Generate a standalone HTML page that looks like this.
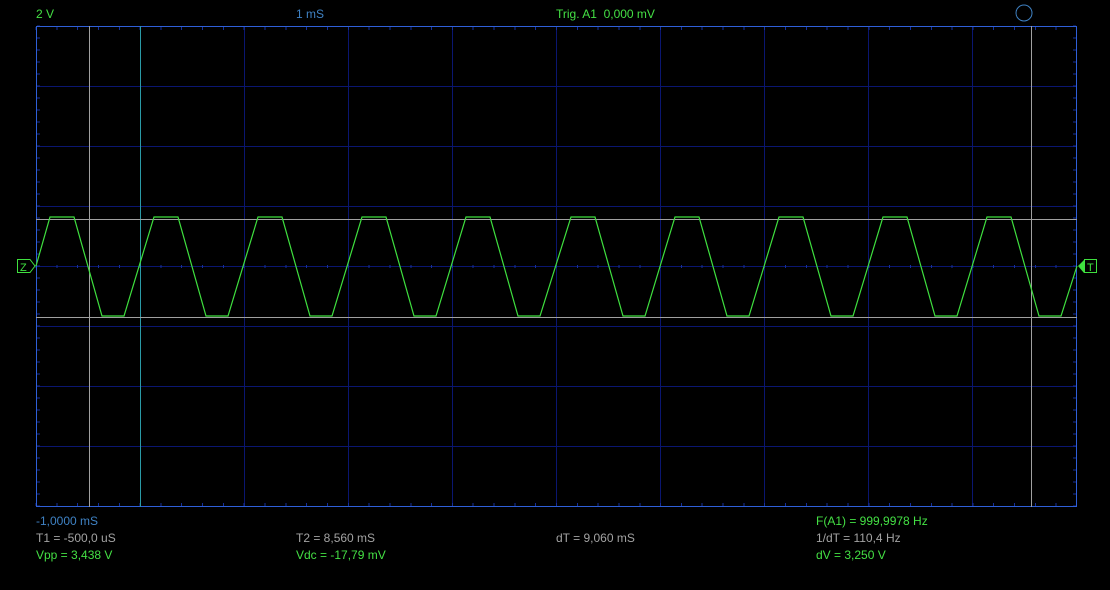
<!DOCTYPE html>
<html><head><meta charset="utf-8"><style>
html,body{margin:0;padding:0;background:#000;width:1110px;height:590px;overflow:hidden}
.t{position:absolute;font-family:"Liberation Sans",sans-serif;font-size:12px;line-height:14px;white-space:pre}
.b{color:#3f82c4}.g{color:#a3a3a3}.gr{color:#44e044}
</style></head><body>
<svg width="1110" height="590" style="position:absolute;left:0;top:0" shape-rendering="crispEdges">
<g stroke="#0a1670" stroke-width="1">
<line x1="36" y1="86.5" x2="1077" y2="86.5"/><line x1="36" y1="146.5" x2="1077" y2="146.5"/>
<line x1="36" y1="206.5" x2="1077" y2="206.5"/><line x1="36" y1="266.5" x2="1077" y2="266.5"/>
<line x1="36" y1="326.5" x2="1077" y2="326.5"/><line x1="36" y1="386.5" x2="1077" y2="386.5"/>
<line x1="36" y1="446.5" x2="1077" y2="446.5"/>
<line x1="244.5" y1="26" x2="244.5" y2="507"/><line x1="348.5" y1="26" x2="348.5" y2="507"/>
<line x1="452.5" y1="26" x2="452.5" y2="507"/><line x1="556.5" y1="26" x2="556.5" y2="507"/>
<line x1="660.5" y1="26" x2="660.5" y2="507"/><line x1="764.5" y1="26" x2="764.5" y2="507"/>
<line x1="868.5" y1="26" x2="868.5" y2="507"/><line x1="972.5" y1="26" x2="972.5" y2="507"/>
</g>
<g stroke="#16309a" stroke-width="1" id="ticks"></g>
<rect x="36.5" y="26.5" width="1040" height="480" fill="none" stroke="#2f5fd8" stroke-width="1"/>
<line x1="140.5" y1="26" x2="140.5" y2="507" stroke="#2a9aa6"/>
<line x1="89.5" y1="26" x2="89.5" y2="507" stroke="#a0a0a0"/>
<line x1="1031.5" y1="26" x2="1031.5" y2="507" stroke="#a0a0a0"/>
<line x1="36" y1="219.5" x2="1077" y2="219.5" stroke="#a0a0a0"/>
<line x1="36" y1="317.5" x2="1077" y2="317.5" stroke="#a0a0a0"/>
<polyline shape-rendering="auto" fill="none" stroke="#3fe03f" stroke-width="1.2" points="36,266 50,217 74,217 102,316 124,316 154,217 178,217 206,316 228,316 258,217 282,217 310,316 332,316 362,217 386,217 414,316 436,316 466,217 490,217 518,316 540,316 571,217 595,217 623,316 645,316 675,217 699,217 727,316 749,316 779,217 803,217 831,316 853,316 883,217 907,217 935,316 957,316 987,217 1011,217 1039,316 1061,316 1077,266"/>
<path shape-rendering="auto" d="M17.5,259.5 H30 L35,266 L30,272.5 H17.5 Z" fill="none" stroke="#3fe03f"/>
<text x="20" y="271" font-family="Liberation Sans" font-size="11" fill="#3fe03f">Z</text>
<path shape-rendering="auto" d="M1078,266 L1084,260 V273 Z" fill="#3fe03f"/>
<rect x="1084.5" y="259.5" width="12" height="13" fill="none" stroke="#3fe03f"/>
<text x="1087" y="271" font-family="Liberation Sans" font-size="11" fill="#3fe03f">T</text>
<circle shape-rendering="auto" cx="1024" cy="13" r="8" fill="none" stroke="#3f82c4"/>
</svg>
<script>
var g=document.getElementById('ticks'),s='';
for(var x=36;x<1077;x+=20.82){s+='<line x1="'+x+'" y1="27" x2="'+x+'" y2="30"/><line x1="'+x+'" y1="503" x2="'+x+'" y2="506"/><line x1="'+x+'" y1="265" x2="'+x+'" y2="268"/>';}
for(var y=26;y<507;y+=12){s+='<line x1="37" y1="'+y+'" x2="40" y2="'+y+'"/><line x1="1073" y1="'+y+'" x2="1076" y2="'+y+'"/>';}
g.innerHTML=s;
</script>
<div class="t gr" style="left:36px;top:7px">2 V</div>
<div class="t b" style="left:296px;top:7px">1 mS</div>
<div class="t gr" style="left:556px;top:7px">Trig. A1  0,000 mV</div>
<div class="t b" style="left:36px;top:514px">-1,0000 mS</div>
<div class="t g" style="left:36px;top:531px">T1 = -500,0 uS</div>
<div class="t gr" style="left:36px;top:548px">Vpp = 3,438 V</div>
<div class="t g" style="left:296px;top:531px">T2 = 8,560 mS</div>
<div class="t gr" style="left:296px;top:548px">Vdc = -17,79 mV</div>
<div class="t g" style="left:556px;top:531px">dT = 9,060 mS</div>
<div class="t gr" style="left:816px;top:514px">F(A1) = 999,9978 Hz</div>
<div class="t g" style="left:816px;top:531px">1/dT = 110,4 Hz</div>
<div class="t gr" style="left:816px;top:548px">dV = 3,250 V</div>
</body></html>
